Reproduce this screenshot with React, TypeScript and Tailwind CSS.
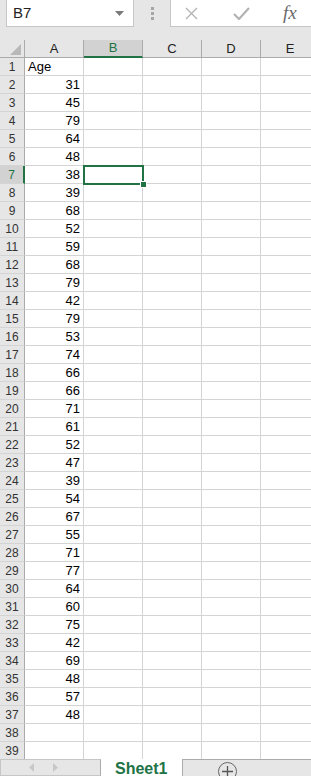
import React from 'react';

const ages = [31, 45, 79, 64, 48, 38, 39, 68, 52, 59, 68, 79, 42, 79, 53, 74, 66, 66, 71, 61, 52, 47, 39, 54, 67, 55, 71, 77, 64, 60, 75, 42, 69, 48, 57, 48];
const cols = ['A', 'B', 'C', 'D', 'E'];

const App: React.FC = () => {
  const rows = Array.from({ length: 39 }, (_, i) => i + 1);

  const cellValue = (r: number, c: string) => {
    if (c !== 'A') return '';
    if (r === 1) return 'Age';
    const v = ages[r - 2];
    return v === undefined ? '' : String(v);
  };

  return (
    <div className="w-[311px] h-[776px] overflow-hidden bg-[#e6e6e6] flex flex-col" style={{ fontFamily: '"Liberation Sans", Arial, sans-serif' }}>
      {/* formula bar */}
      <div className="h-[40px] shrink-0 flex items-start">
        <div className="ml-[6px] w-[128px] h-[27px] bg-white border border-t-0 border-[#c6c6c6] flex items-center justify-between pl-[6px] pr-[9px]">
          <span className="text-[15px] text-[#222]">B7</span>
          <svg width="9" height="5" viewBox="0 0 9 5"><path d="M0 0h9L4.5 5z" fill="#7a7a7a" /></svg>
        </div>
        <div className="w-[36px] h-[27px] flex flex-col items-center justify-center gap-[2px]">
          <span className="w-[3px] h-[3px] bg-[#a6a6a6]" />
          <span className="w-[3px] h-[3px] bg-[#a6a6a6]" />
          <span className="w-[3px] h-[3px] bg-[#a6a6a6]" />
        </div>
        <div className="flex-1 h-[27px] bg-white border border-t-0 border-r-0 border-[#c6c6c6] flex items-center">
          <svg className="ml-[14px]" width="13" height="13" viewBox="0 0 13 13"><path d="M1 1l11 11M12 1L1 12" stroke="#b3b3b3" strokeWidth="1.3" /></svg>
          <svg className="ml-[35px]" width="17" height="13" viewBox="0 0 17 13"><path d="M1 7l5 5L16 1" stroke="#b3b3b3" strokeWidth="2.2" fill="none" /></svg>
          <span className="ml-[33px] text-[19px] italic text-[#6a6a6a]" style={{ fontFamily: '"Liberation Serif", "Times New Roman", serif' }}>fx</span>
        </div>
      </div>

      {/* column headers */}
      <div className="flex h-[18px] shrink-0 border-b border-[#ababab]">
        <div className="w-[25px] shrink-0 border-r border-[#ababab] relative">
          <svg className="absolute right-[3px] bottom-[2px]" width="11" height="11" viewBox="0 0 11 11"><path d="M11 0v11H0z" fill="#b8b8b8" /></svg>
        </div>
        {cols.map((c) => (
          <div
            key={c}
            className={`w-[59px] shrink-0 flex items-center justify-center text-[13px] border-r border-[#ababab] ${c === 'B' ? 'bg-[#d2d2d2] text-[#217346] border-b-2 border-b-[#217346] -mb-px' : 'text-[#222]'}`}
          >
            {c}
          </div>
        ))}
      </div>

      {/* grid */}
      <div className="flex-1 bg-white overflow-hidden">
        {rows.map((r) => (
          <div key={r} className="flex h-[18px]">
            <div
              className={`w-[25px] shrink-0 flex items-center justify-center text-[12px] border-b border-[#d4d4d4] ${r === 7 ? 'bg-[#d2d2d2] text-[#217346] border-r-2 border-r-[#217346]' : 'bg-[#e6e6e6] text-[#333] border-r border-r-[#ababab]'}`}
            >
              {r}
            </div>
            {cols.map((c) => (
              <div
                key={c}
                className={`w-[59px] shrink-0 border-r border-b border-[#d4d4d4] text-[13px] text-black flex items-center px-[3px] relative ${r === 1 ? 'justify-start' : 'justify-end'}`}
              >
                {cellValue(r, c)}
                {r === 7 && c === 'B' && (
                  <div className="absolute z-10 left-[-1px] top-[-1px] w-[61px] h-[20px] border-2 border-[#217346]">
                    <div className="absolute right-[-5px] bottom-[-5px] w-[7px] h-[7px] bg-[#217346] border border-white" />
                  </div>
                )}
              </div>
            ))}
          </div>
        ))}
      </div>

      {/* sheet tabs */}
      <div className="h-[17px] shrink-0 flex bg-white">
        <div className="w-[101px] bg-[#e6e6e6] border border-r-[#ababab] border-[#c6c6c6] flex items-center pl-[28px] gap-[19px]">
          <svg width="5" height="9" viewBox="0 0 5 9"><path d="M5 0v9L0 4.5z" fill="#c8c8c8" /></svg>
          <svg width="5" height="9" viewBox="0 0 5 9"><path d="M0 0v9l5-4.5z" fill="#c8c8c8" /></svg>
        </div>
        <div className="w-[81px] bg-white flex items-start pl-[14px]">
          <span className="text-[16px] font-bold text-[#217346] leading-[20px]">Sheet1</span>
        </div>
        <div className="flex-1 bg-[#e6e6e6] border-t border-l border-[#ababab] flex justify-center pt-[2px]">
          <div className="w-[19px] h-[19px] rounded-full border border-[#666] flex items-center justify-center text-[#555] -ml-[40px]">
            <svg width="11" height="11" viewBox="0 0 11 11"><path d="M5.5 0v11M0 5.5h11" stroke="#555" strokeWidth="1.3" /></svg>
          </div>
        </div>
      </div>
    </div>
  );
};

export default App;
